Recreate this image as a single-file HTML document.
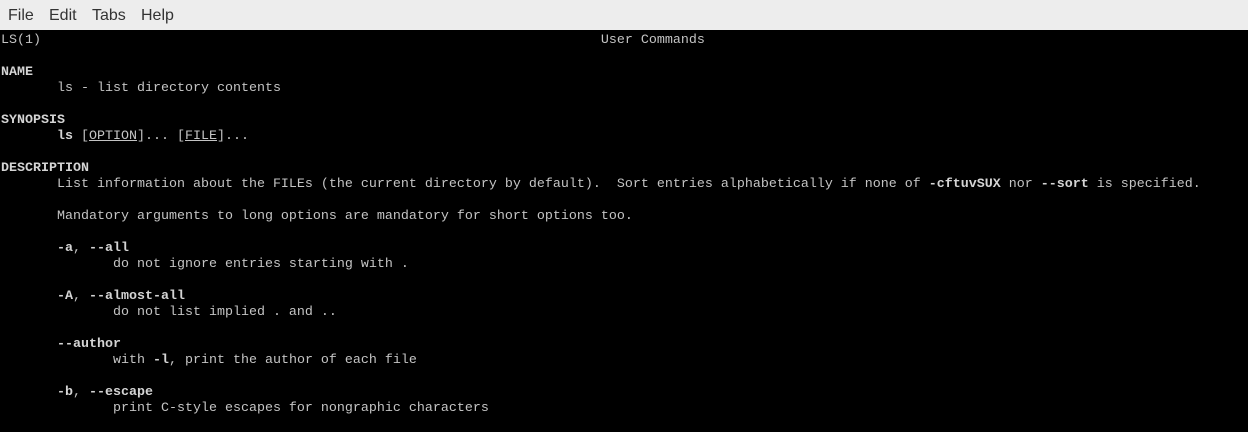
<!DOCTYPE html>
<html><head><style>
html,body{margin:0;padding:0;width:1248px;height:432px;overflow:hidden;background:#000}
#menu{position:absolute;left:0;top:0;width:1248px;height:30px;background:#ededed;font-family:"Liberation Sans",sans-serif;font-size:16px;color:#333}
#menu span{position:absolute;top:7px}
pre{position:absolute;left:1px;top:33px;margin:0;font-family:"Liberation Mono",monospace;font-size:13.33px;line-height:16px;color:#c4c4c4}
b{color:#d4d4d4}
u{text-decoration:underline}
</style></head><body>
<div id="menu"><span style="left:8px">File</span><span style="left:49px">Edit</span><span style="left:92px">Tabs</span><span style="left:141px">Help</span></div>
<pre>LS(1)                                                                      User Commands

<b>NAME</b>
       ls - list directory contents

<b>SYNOPSIS</b>
       <b>ls</b> [<u>OPTION</u>]... [<u>FILE</u>]...

<b>DESCRIPTION</b>
       List information about the FILEs (the current directory by default).  Sort entries alphabetically if none of <b>-cftuvSUX</b> nor <b>--sort</b> is specified.

       Mandatory arguments to long options are mandatory for short options too.

       <b>-a</b>, <b>--all</b>
              do not ignore entries starting with .

       <b>-A</b>, <b>--almost-all</b>
              do not list implied . and ..

       <b>--author</b>
              with <b>-l</b>, print the author of each file

       <b>-b</b>, <b>--escape</b>
              print C-style escapes for nongraphic characters
</pre>
</body></html>
